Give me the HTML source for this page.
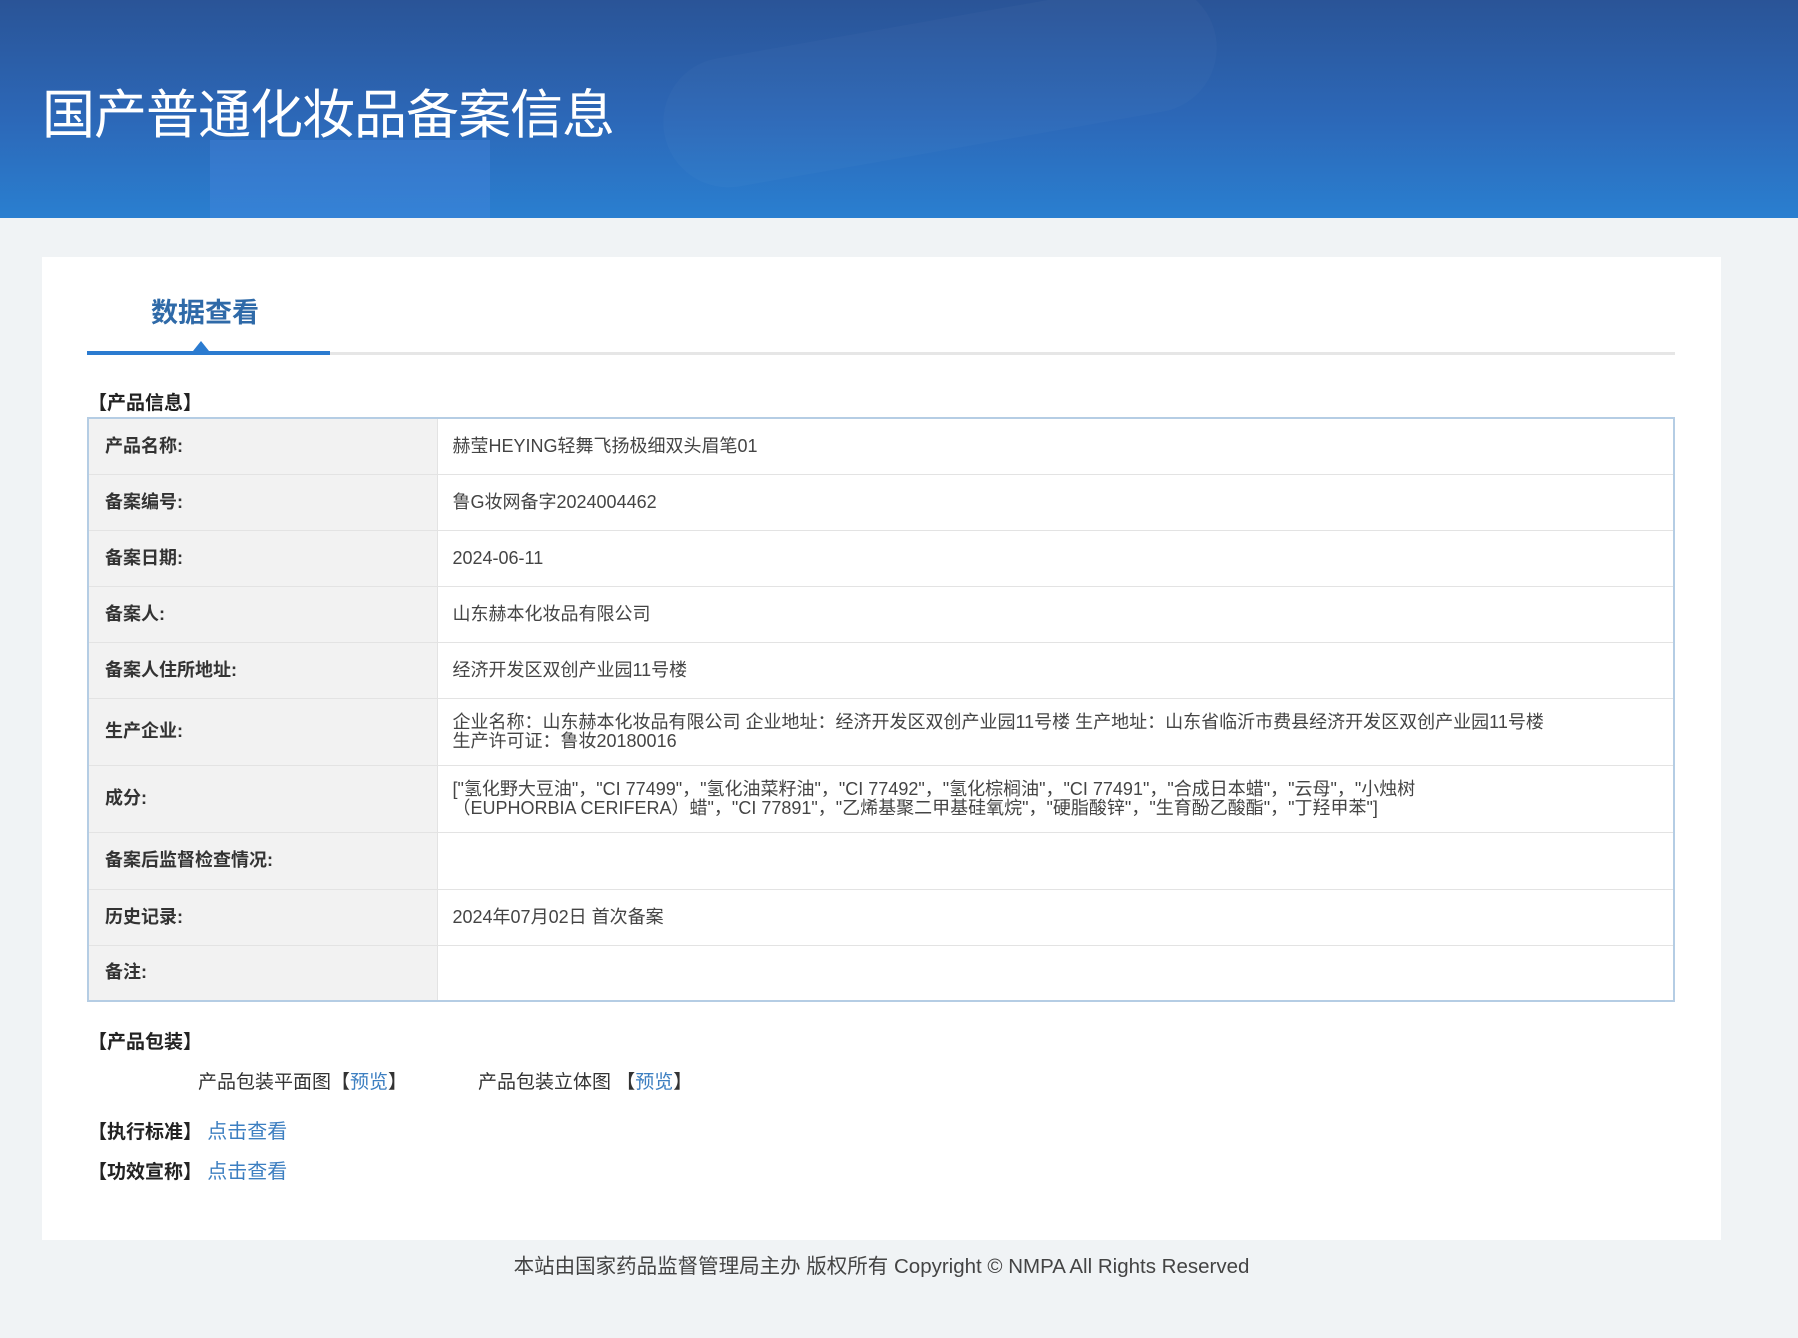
<!DOCTYPE html>
<html><head><meta charset="utf-8"><style>
*{margin:0;padding:0;box-sizing:border-box}
body{width:1798px;height:1338px;background:#f0f3f5;font-family:"Liberation Sans","Noto Sans CJK SC",sans-serif;color:#333;position:relative;overflow:hidden}
.hd{position:absolute;left:0;top:0;width:1798px;height:218px;background:linear-gradient(180deg,#2a5497 0%,#2c68b8 55%,#2a7fd0 100%);overflow:hidden}
.hd .s1{position:absolute;left:210px;top:140px;width:280px;height:100px;background:rgba(80,140,230,.3)}
.hd .s2{position:absolute;left:660px;top:20px;width:560px;height:130px;border-radius:80px;background:rgba(255,255,255,.025);transform:rotate(-10deg)}
.hd h1{position:absolute;left:42px;top:86px;font-size:53px;line-height:60px;font-weight:normal;color:#fff;letter-spacing:-1px}
.card{position:absolute;left:42px;top:257px;width:1679px;height:983px;background:#fff}
.tab{position:absolute;left:151px;top:296px;font-size:27px;font-weight:bold;color:#2f6aa8;line-height:34px}
.gl{position:absolute;left:87px;top:352px;width:1588px;height:3px;background:#e6e6e6}
.bl{position:absolute;left:87px;top:351px;width:243px;height:4px;background:#2b7bd0}
.tri{position:absolute;left:193px;top:341px;width:0;height:0;border-left:8px solid transparent;border-right:8px solid transparent;border-bottom:10px solid #2b7bd0}
.sec{position:absolute;font-size:19px;font-weight:bold;color:#222;line-height:24px}
table{position:absolute;left:87px;top:417px;width:1588px;border-collapse:collapse;border:2px solid #b5cde4;font-size:18px}
td{border-bottom:1px solid #e3e3e3;vertical-align:middle;line-height:19px}
td.l{width:349px;background:#f2f2f2;font-weight:bold;color:#333;padding-left:16px;border-right:1px solid #e3e3e3}
td.v{padding-left:15px;color:#444}
.t{position:absolute;font-size:19px;line-height:24px;color:#333}
a{color:#3d7fc1;text-decoration:none}
.sec a{font-size:20px}
.ft{position:absolute;left:0;width:1763px;text-align:center;top:1249px;font-size:20.5px;color:#444}
</style></head><body>
<div class="hd"><div class="s1"></div><div class="s2"></div><h1>国产普通化妆品备案信息</h1></div>
<div class="card"></div>
<div class="tab">数据查看</div>
<div class="gl"></div><div class="bl"></div><div class="tri"></div>
<div class="sec" style="left:88px;top:392px">【产品信息】</div>
<table>
<tr style="height:56px"><td class="l">产品名称:</td><td class="v">赫莹HEYING轻舞飞扬极细双头眉笔01</td></tr>
<tr style="height:56px"><td class="l">备案编号:</td><td class="v">鲁G妆网备字2024004462</td></tr>
<tr style="height:56px"><td class="l">备案日期:</td><td class="v">2024-06-11</td></tr>
<tr style="height:56px"><td class="l">备案人:</td><td class="v">山东赫本化妆品有限公司</td></tr>
<tr style="height:56px"><td class="l">备案人住所地址:</td><td class="v">经济开发区双创产业园11号楼</td></tr>
<tr style="height:67px"><td class="l">生产企业:</td><td class="v">企业名称：山东赫本化妆品有限公司 企业地址：经济开发区双创产业园11号楼 生产地址：山东省临沂市费县经济开发区双创产业园11号楼<br>生产许可证：鲁妆20180016</td></tr>
<tr style="height:67px"><td class="l">成分:</td><td class="v">["氢化野大豆油"，"CI 77499"，"氢化油菜籽油"，"CI 77492"，"氢化棕榈油"，"CI 77491"，"合成日本蜡"，"云母"，"小烛树<br>（EUPHORBIA CERIFERA）蜡"，"CI 77891"，"乙烯基聚二甲基硅氧烷"，"硬脂酸锌"，"生育酚乙酸酯"，"丁羟甲苯"]</td></tr>
<tr style="height:57px"><td class="l">备案后监督检查情况:</td><td class="v"></td></tr>
<tr style="height:56px"><td class="l">历史记录:</td><td class="v">2024年07月02日 首次备案</td></tr>
<tr style="height:56px"><td class="l">备注:</td><td class="v"></td></tr>
</table>
<div class="sec" style="left:88px;top:1031px">【产品包装】</div>
<div class="t" style="left:198px;top:1071px">产品包装平面图【<a>预览</a>】</div>
<div class="t" style="left:478px;top:1071px">产品包装立体图 【<a>预览</a>】</div>
<div class="sec" style="left:88px;top:1120px">【执行标准】 <a style="font-weight:normal">点击查看</a></div>
<div class="sec" style="left:88px;top:1160px">【功效宣称】 <a style="font-weight:normal">点击查看</a></div>
<div class="ft">本站由国家药品监督管理局主办 版权所有 Copyright © NMPA All Rights Reserved</div>
</body></html>
